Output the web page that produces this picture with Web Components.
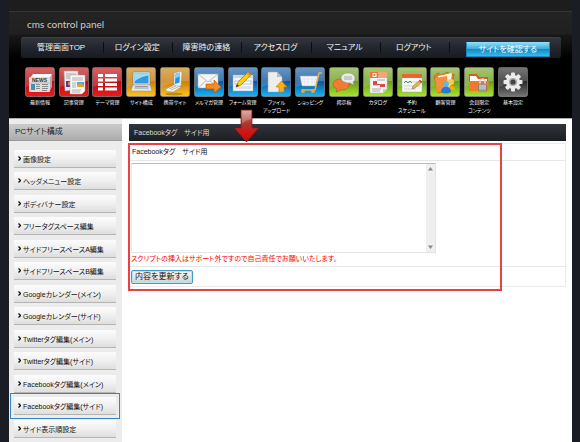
<!DOCTYPE html>
<html lang="ja">
<head>
<meta charset="utf-8">
<title>cms control panel</title>
<style>
html,body{margin:0}
body{background:#1a1d23;font-family:"Liberation Sans","Noto Sans CJK JP",sans-serif;font-size:8px;font-feature-settings:"palt";color:#222}
</style>
</head>
<body>
<cms-page></cms-page>
<script>
const shadow=(el,html)=>{const t=document.createElement('template');t.innerHTML=html;el.attachShadow({mode:'open'}).append(t.content.cloneNode(true));};

const ART={
news:`<path d="M5 11l3-4h19l-2 4z" fill="#fff"/><path d="M25 11l2-4v13l-3 5z" fill="#aaa"/><rect x="4" y="10" width="21" height="15" rx="1" fill="#dedede"/><path d="M4 16h21" stroke="#bbb"/><text x="7" y="15" font-size="5" font-weight="bold" font-family="Liberation Sans" fill="#333">NEWS</text><rect x="6" y="17" width="4" height="6" fill="#4b8fae"/><path d="M11 17.500h4M11 19.500h4M11 21.500h4M17 17.500h6M17 19.500h6M17 21.500h6M17 23.500h5" stroke="#777" stroke-width=".8"/>`,
article:`<path d="M5 4h14v18l-13 2z" fill="#e9eaf0" stroke="#aaa" stroke-width=".5"/><path d="M7 7h10M7 9h9M7 11h9" stroke="#999" stroke-width=".8"/><rect x="7" y="14" width="5" height="6" fill="#3b4892"/><rect x="9" y="15" width="2" height="3" fill="#d77"/><path d="M11 8h15v16l-3 3H11z" fill="#f8f8f8" stroke="#aaa" stroke-width=".5"/><path d="M13 11h11M13 13h11M13 16h4M13 18h4M13 20h4M13 23h9M13 25h8" stroke="#999" stroke-width=".8"/><rect x="18" y="15" width="7" height="5" fill="#4aa7da"/><path d="M18 20v-2l3-2 4 2v2z" fill="#e3a42e"/>`,
theme:`<path d="M6 7h5v3H6zM13 7h12v3H13zM6 11.500h5v3H6zM13 11.500h12v3H13zM6 16h5v3H6zM13 16h12v3H13zM6 20.500h5v3H6zM13 20.500h12v3H13z" fill="#fff"/>`,
laptop:`<rect x="7" y="5" width="17" height="13" rx="1" fill="#e9edf1" stroke="#777" stroke-width=".6"/><rect x="8.500" y="6.500" width="14" height="10" fill="#329bdc"/><path d="M8.500 6.500h14v2q-8 1-14 6z" fill="#9addf8"/><path d="M7 18h17l2 6H5z" fill="#e5e5e5" stroke="#999" stroke-width=".5"/><path d="M9 19.500h13M8.500 21h14" stroke="#888" stroke-width=".8"/>`,
mobile:`<ellipse cx="14" cy="27" rx="9" ry="1.500" fill="#9a7000" opacity=".6"/><path d="M14 6l7-2 1 2-1 13-7 1z" fill="#eef2f5" stroke="#888" stroke-width=".5"/><path d="M15.500 7l4.500-1.500-.5 10-4.500 1.500z" fill="#1797e5"/><path d="M15.500 7l4.500-1.500v4l-5 2z" fill="#7fd2f8"/><path d="M6 22l8-4 7 2-8 5-7-1z" fill="#f5f5f5" stroke="#999" stroke-width=".5"/><path d="M9 22l7-3M11 23l7-3" stroke="#aaa" stroke-width=".8"/>`,
mail:`<rect x="4" y="7" width="20" height="14" fill="#f5f5f5" stroke="#aaa" stroke-width=".5"/><path d="M4 7l10 8 10-8M4 21l8-7M24 21l-8-7" fill="none" stroke="#aaa" stroke-width=".8"/><path d="M12 17h8v-4l7 7-7 6v-4h-8z" fill="#f58b22" stroke="#bd5400" stroke-width=".6"/>`,
form:`<rect x="5" y="8" width="20" height="16" fill="#f4f6f8" stroke="#9ab" stroke-width=".5"/><path d="M5 8h20v3H5z" fill="#cdd7df"/><rect x="7" y="14" width="16" height="3" fill="#fff" stroke="#8ba0b0" stroke-width=".6"/><rect x="7" y="19" width="16" height="3" fill="#dce5ed"/><path d="M8 20l2-5L20 5l3 3-10 10z" fill="#fc1" stroke="#916000" stroke-width=".6"/><path d="M20 5l3 3-1.500 1.500-3-3z" fill="#e6a010"/><path d="M8 20l1-3 2 2z" fill="#333"/>`,
file:`<path d="M7 5h9l5 5v15H7z" fill="#ededed" stroke="#aaa" stroke-width=".5"/><path d="M16 5v5h5z" fill="#bbb"/><path d="M18 25v-5h-3l5.500-6 5.500 6h-3v5z" fill="#fcae13" stroke="#c47a00" stroke-width=".6"/>`,
cart:`<path d="M5 9h18l-2 10H7z" fill="#f6f8fa" stroke="#9ab" stroke-width=".6"/><path d="M9 9l1 10M13 9v10M17 9v10M21 9l-2 10M6 12h16M6 15h16" stroke="#d3dae1" stroke-width=".5"/><path d="M27 6h-3l-4 17H7" fill="none" stroke="#e9b04a" stroke-width="1.500"/><circle cx="8" cy="24" r="2" fill="#f5a51c"/><circle cx="18" cy="24" r="2" fill="#f5a51c"/>`,
talk:`<path d="M12 12c5 0 8 2 8 5.500S17 23 12 23l-5 2 1-3c-2-1-4-2-4-4.500C4 14 7 12 12 12z" fill="#ef7c32" stroke="#b54f10" stroke-width=".5"/><path d="M19 6c4 0 7 2 7 5 0 2-1 3-2 4l1 3-4-2c-5 0-9-2-9-5s3-5 7-5z" fill="#e8ebe9" stroke="#888" stroke-width=".5"/><path d="M15 10h8M15 12h8" stroke="#999" stroke-width=".8"/>`,
catalog:`<path d="M7 5h17v17l-4 4H7z" fill="#f5f5f5" stroke="#bbb" stroke-width=".5"/><path d="M7 5h8v6H7z" fill="#f0772e"/><path d="M15 5h9v6h-9z" fill="#f3a578"/><rect x="10" y="6.500" width="3" height="3" fill="none" stroke="#fff"/><path d="M14 13h8M10 18h6" stroke="#aaa"/><path d="M10 14h4v3h8v3h-5v-2h-7z" fill="#d84a4c"/><path d="M9 22h9M9 24h8" stroke="#999" stroke-width=".8"/><path d="M24 22h-4v4z" fill="#ccc"/>`,
calendar:`<rect x="5" y="7" width="20" height="18" fill="#f7f7f7" stroke="#aaa" stroke-width=".5"/><path d="M5 7h20v4H5z" fill="#ec652b"/><path d="M7 15h16M7 19h16M7 22h12" stroke="#bbb" stroke-width=".6"/><path d="M7 16l2-2 2 2 2-2 2 2" fill="none" stroke="#3a9b4e"/><path d="M15 22l1-3 7-6 2 2-7 6z" fill="#f9b22d" stroke="#665" stroke-width=".5"/><path d="M22 14l1-1 2 2-1 1z" fill="#c33"/>`,
customer:`<path d="M4 9l4-3 3 2 7-3 1 3 5-1-3 16-13 3z" fill="#f07c28" stroke="#ae4d0b" stroke-width=".5"/><path d="M8 9l14-3-2 15-10 2z" fill="#fff3dd"/><path d="M5 11l12-2 1 14-11 3z" fill="#f68f3a"/><circle cx="21" cy="15" r="3" fill="#ffce3d"/><path d="M17 23c0-6 8-6 8 0z" fill="#f5ac14"/><circle cx="16" cy="17" r="3" fill="#64b6f3"/><path d="M11 25c0-7 10-7 10 0q-5 3-10 0z" fill="#287ad5"/>`,
members:`<path d="M5 7h8l2 3h9v14H5z" fill="#d85b16"/><path d="M6 9h6l2 3h9v3H6z" fill="#fff"/><path d="M5 14h20l-1 10H5z" fill="#f07a2b"/><path d="M16 18v-3c0-4 5-4 5 0v3" fill="none" stroke="#ddd" stroke-width="1.500"/><rect x="14.500" y="17" width="8" height="7" rx="1" fill="#aaa" stroke="#666" stroke-width=".5"/><path d="M15 19h7M15 21h7" stroke="#ddd" stroke-width=".7"/>`,
gear:`<g fill="#ececec"><circle cx="15" cy="15" r="7"/><rect x="13" y="5.500" width="4" height="19" rx="1"/><rect x="5.500" y="13" width="19" height="4" rx="1"/><g transform="rotate(45 15 15)"><rect x="13" y="5.500" width="4" height="19" rx="1"/><rect x="5.500" y="13" width="19" height="4" rx="1"/></g></g><circle cx="15" cy="15" r="4" fill="#aaa"/><circle cx="15" cy="15" r="2.600" fill="#444"/>`
};
const TONE={red:['#d77','#b00d12','#f01a1a'],gold:['#ddb878','#c77908','#ffc421'],blue:['#7ba6ce','#0b4f92','#19b4fa'],green:['#b6d08a','#64971a','#a8e62b'],gray:['#888','#222','#777']};

customElements.define('tool-icon',class extends HTMLElement{connectedCallback(){
const [a,b,c]=TONE[this.getAttribute('tone')];
shadow(this,`<style>:host{display:block;min-width:0}a{display:flex;flex-direction:column;align-items:center;color:#fff;text-decoration:none;text-align:center;font-size:5px;line-height:8px;white-space:nowrap}svg{display:block;width:30px;height:30px;margin-bottom:1px}</style>
<a href="#"><svg viewBox="0 0 30 30" aria-hidden="true"><defs><linearGradient id="g" x2="0" y2="1"><stop stop-color="${b}"/><stop offset=".45" stop-color="${b}"/><stop offset="1" stop-color="${c}"/></linearGradient><linearGradient id="s" x2="0" y2="1"><stop stop-color="${a}"/><stop offset="1" stop-color="${a}" stop-opacity=".4"/></linearGradient></defs><rect x=".5" y=".5" width="29" height="29" rx="2" fill="url(#g)" stroke="#999" stroke-opacity=".6"/><path d="M1 1h28v13Q15 14 1 20z" fill="url(#s)" opacity=".8"/>${ART[this.getAttribute('art')]}</svg><span><slot></slot></span></a>`);}});

customElements.define('cms-nav',class extends HTMLElement{connectedCallback(){shadow(this,`<style>
:host{display:block}nav{display:grid;grid-template-columns:83fr repeat(5,69fr) 111fr;align-items:center;height:21px;border-radius:3px;background:linear-gradient(#34383e,#23272d 50%,#181b20);box-shadow:inset 0 1px #3d4147}
a{padding:1px 2px 0 0;color:#f2f2f2;text-decoration:none;text-align:center;line-height:10px;border-right:1px solid #0c0e11;white-space:nowrap}
button{font:inherit;font-feature-settings:inherit;color:#fff;margin:4px 11px 0 16px;height:15px;padding:0;border:1px solid #1a87bd;border-top-color:#8ddcf7;border-radius:1px;background:linear-gradient(#8bd8f4,#3aaadb 45%,#1488c8 50%,#39bbe8);white-space:nowrap;line-height:13px}
</style><nav><a href="#">管理画面TOP</a><a href="#">ログイン設定</a><a href="#">障害時の連絡</a><a href="#">アクセスログ</a><a href="#">マニュアル</a><a href="#">ログアウト</a><button type="button">サイトを確認する</button></nav>`);}});

customElements.define('cms-header',class extends HTMLElement{connectedCallback(){
const tools=[['news','red','最新情報'],['article','red','記事管理'],['theme','red','テーマ管理'],['laptop','gold','サイト構成'],['mobile','gold','携帯サイト'],['mail','blue','メルマガ管理'],['form','blue','フォーム管理'],['file','blue','ファイル<br>アップロード'],['cart','blue','ショッピング'],['talk','green','掲示板'],['catalog','green','カタログ'],['calendar','green','予約<br>スケジュール'],['customer','green','顧客管理'],['members','green','会員限定<br>コンテンツ'],['gear','gray','基本設定']];
shadow(this,`<style>:host{display:block;background:linear-gradient(#1d1d1d 0 11px,#353535 11px 12px,#242424 12px,#202020 34px,#181818 35px,#000 58px);padding:12px 0 4px}
h1{margin:0;padding:5px 18px 1px;font:10px/14px Lato,sans-serif;color:#ccc}
cms-nav{margin:5px 11px 0 12px}
.tools{display:grid;grid-template-columns:repeat(15,minmax(0,1fr));margin:9px 42px 0 14px}</style>
<h1>cms control panel</h1><cms-nav></cms-nav><div class="tools">${tools.map(t=>`<tool-icon art="${t[0]}" tone="${t[1]}">${t[2]}</tool-icon>`).join('')}</div>`);}});

customElements.define('side-item',class extends HTMLElement{connectedCallback(){shadow(this,`<style>:host{display:block}
a{display:flex;align-items:center;height:17px;padding-left:4px;color:#111;text-decoration:none;background:linear-gradient(#fcfcfc,#f0f0f0 50%,#dedede);border-bottom:1px solid #b5b5b5;white-space:nowrap;font-size:7px}
svg{width:3px;height:5px;margin-right:2px}
:host([current]) a{outline:1px solid #3585c6;outline-offset:3px}</style>
<a href="#"><svg viewBox="0 0 3 5" aria-hidden="true"><path d="M.5.5l2 2-2 2" fill="none" stroke="#111" stroke-width="1.300"/></svg><slot></slot></a>`);}});

customElements.define('cms-sidebar',class extends HTMLElement{connectedCallback(){
const items=['画像設定','ヘッダメニュー設定','ボディバナー設定','フリータグスペース編集','サイドフリースペースA編集','サイドフリースペースB編集','Googleカレンダー(メイン)','Googleカレンダー(サイド)','Twitterタグ編集(メイン)','Twitterタグ編集(サイド)','Facebookタグ編集(メイン)','Facebookタグ編集(サイド)','サイド表示順設定'];
shadow(this,`<style>:host{display:block;background:#ececec;padding-top:5px}
h2{margin:0 0 9px;padding-left:6px;font-size:8px;line-height:16px;font-weight:normal;color:#222;background:linear-gradient(#cbcbcb,#adadad);border-bottom:1px solid #999}
side-item{margin:0 6px 4px 5px}side-item:nth-of-type(even){margin-bottom:5px}</style>
<h2>PCサイト構成</h2>${items.map((t,i)=>`<side-item${i==11?' current':''}>${t}</side-item>`).join('')}`);}});

customElements.define('tag-editor',class extends HTMLElement{connectedCallback(){shadow(this,`<style>
:host{display:block;position:relative;padding:5px 6px 0 7px;background:#fff;font-size:7px}
h2{margin:0 0 2px;padding-left:5px;font-size:7px;line-height:17px;font-weight:normal;color:#ddd;background:linear-gradient(#32363c,#1a1d22)}
form{position:relative;border:1px solid #ebebeb;margin:0}
label{display:block;padding-left:2px;line-height:16px;border-bottom:1px solid #e6e6e6;color:#111}
.field{padding:2px 1px 2px;border-bottom:1px solid #e6e6e6}
.box{display:flex;width:70%;height:88px;border:1px solid #e3e3e8;border-top-color:#b9bac4}
textarea{flex:1;min-width:0;resize:none;border:0;padding:1px;margin:0;outline:0;background:#fff;overflow:hidden}
.bar{width:9px;background:#efefef;display:flex;flex-direction:column;justify-content:space-between;align-items:center;padding:3px 0;box-sizing:border-box}
.bar svg{width:5px;height:4px}
p{margin:0;line-height:11px;color:#f00}
.act{padding:3px 1px 2px}
.act button{display:block;font:inherit;font-feature-settings:inherit;font-size:8px;line-height:12px;height:14px;padding:0 3px;border:1px solid #3f9cc4;border-radius:2px;background:linear-gradient(#f5f5f5,#e8e8e8 50%,#cfcfcf);box-shadow:inset 0 0 0 1px #b7e3f5;color:#111}
.mark{position:absolute;inset:-1px 63px -5px -2px;border:2px solid #e94146;pointer-events:none}
.arrow{position:absolute;left:112px;top:-10px;width:25px;height:34px}
</style><h2>Facebookタグ　サイド用</h2>
<form><label for="tag">Facebookタグ　サイド用</label>
<div class="field"><div class="box"><textarea id="tag"></textarea><div class="bar"><svg viewBox="0 0 5 4"><path d="M2.500 0L5 3.500H0z" fill="#888"/></svg><svg viewBox="0 0 5 4"><path d="M2.500 4L5 .5H0z" fill="#888"/></svg></div></div>
<p>スクリプトの挿入はサポート外ですので自己責任でお願いいたします。</p></div>
<div class="act"><button type="button">内容を更新する</button></div><div class="mark"></div></form>
<svg class="arrow" viewBox="0 0 25 34" aria-hidden="true"><defs><linearGradient id="r" x2="0" y2="1"><stop stop-color="#d89a92"/><stop offset=".4" stop-color="#a83a34"/><stop offset=".7" stop-color="#d51313"/><stop offset="1" stop-color="#b40d0d"/></linearGradient></defs><path d="M7 1h11v18h6.500L12.500 33 .5 19H7z" fill="url(#r)" stroke="#8b1a16" stroke-width=".7"/><path d="M8 2h9v8q-5 1-9 5z" fill="#fff" opacity=".2"/></svg>`);}});

customElements.define('cms-page',class extends HTMLElement{connectedCallback(){shadow(this,`<style>
:host{display:flex;flex-direction:column;box-sizing:border-box;min-height:100vh;padding:0 8px 0 9px}
main{flex:1;display:grid;grid-template-columns:113px minmax(0,1fr);border-top:1px solid #aaa;background:#fff}</style>
<cms-header></cms-header><main><cms-sidebar></cms-sidebar><tag-editor></tag-editor></main>`);}});
</script>
</body>
</html>
